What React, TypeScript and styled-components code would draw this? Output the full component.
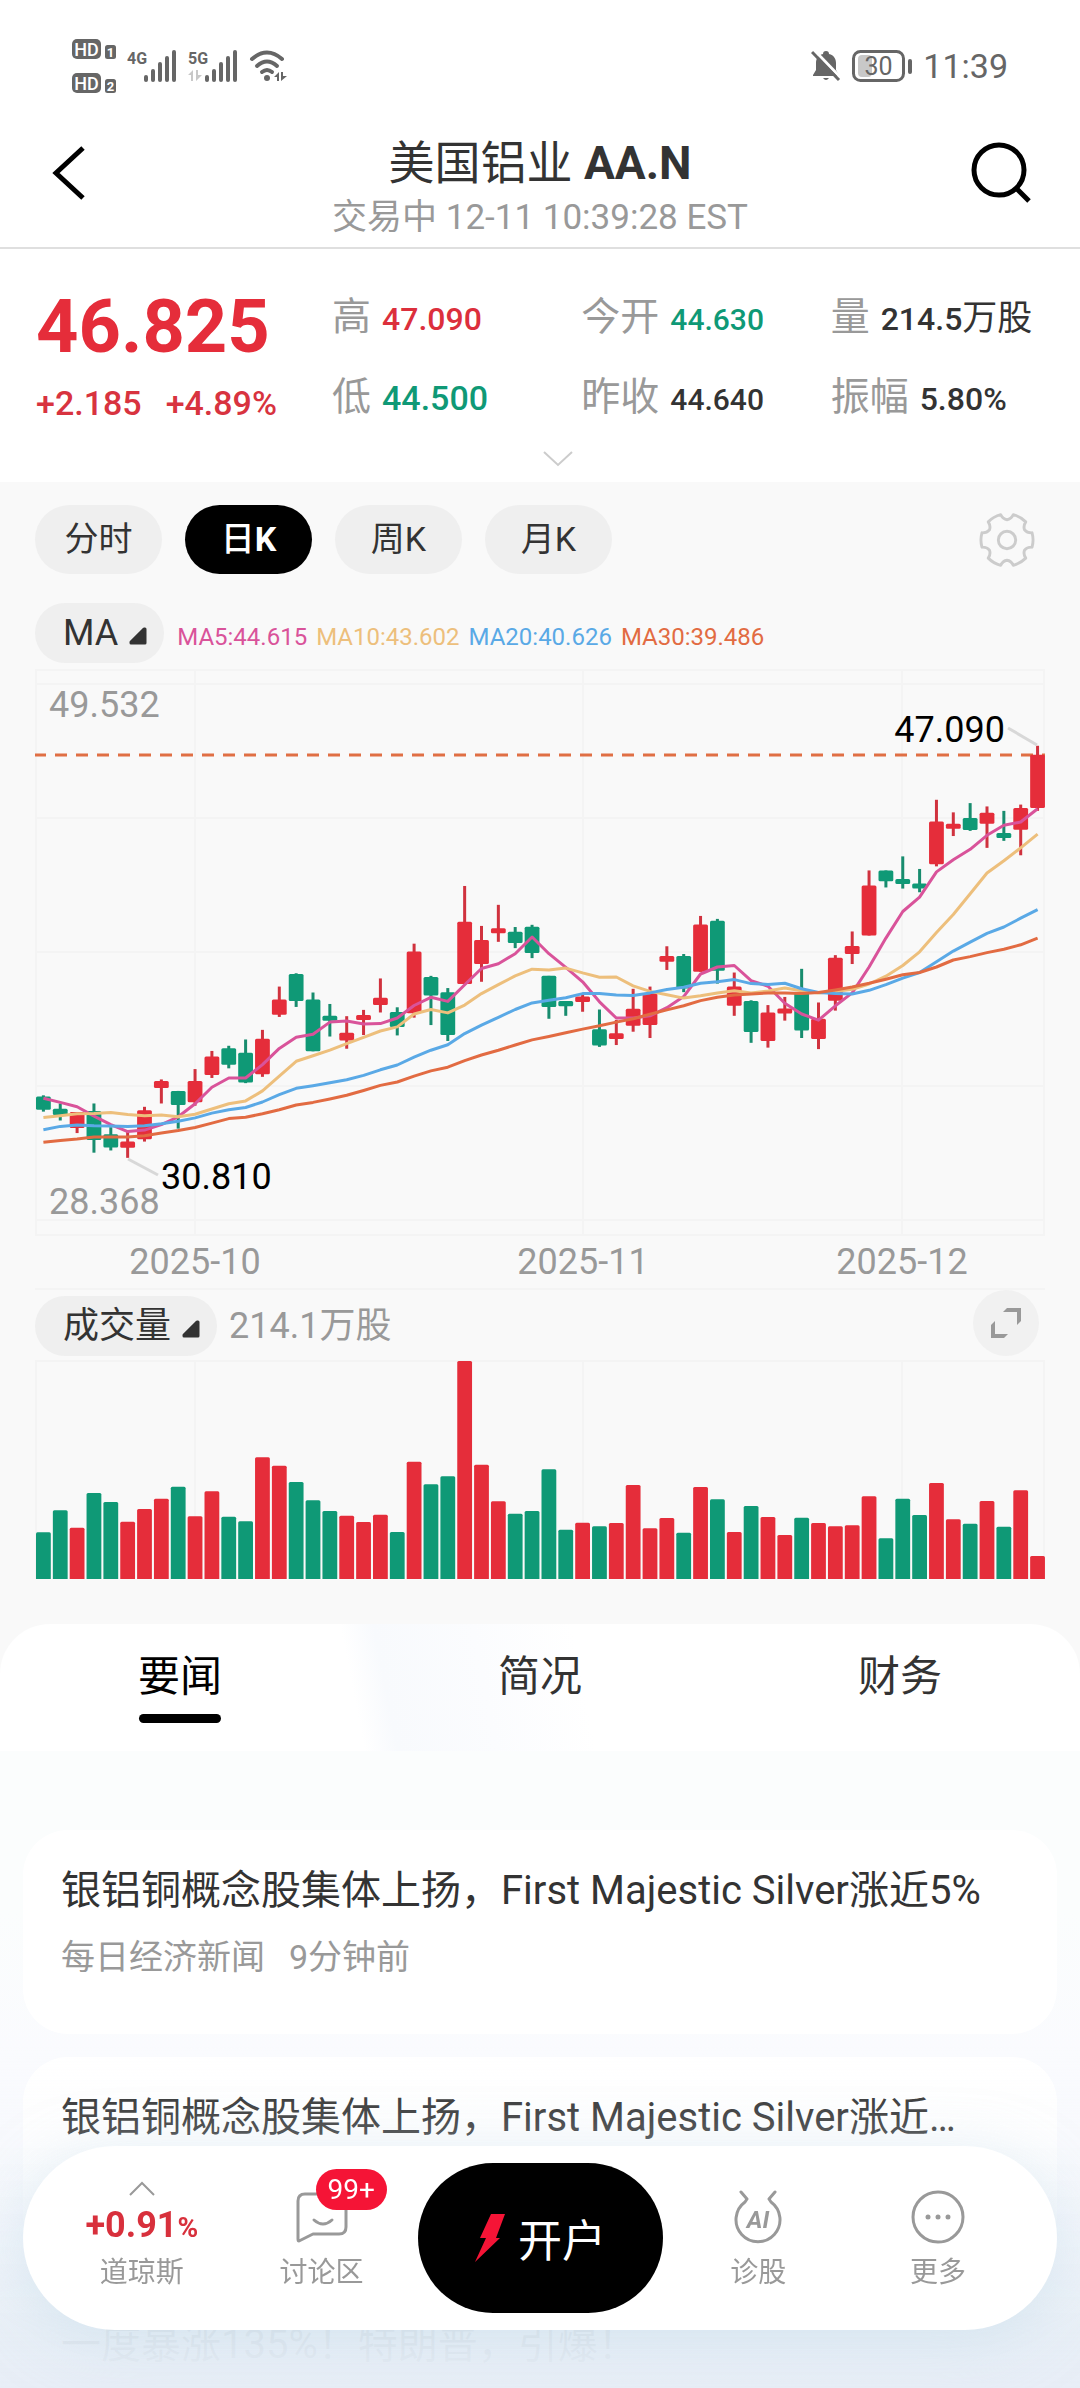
import React, { useState } from "react";
import styled, { createGlobalStyle } from "styled-components";

const RED = "#e52d3a";
const GREEN = "#0f9976";
const GRAY = "#999999";
const INK = "#333333";

const GlobalStyle = createGlobalStyle`
  * { box-sizing: border-box; }
  html, body { margin: 0; padding: 0; }
  body {
    background: #f9f9f9;
    color: ${INK};
    font-family: Roboto, "Noto Sans CJK SC", sans-serif;
    font-size: 36px;
  }
  button {
    border: 0;
    padding: 0;
    margin: 0;
    background: none;
    color: inherit;
    font: inherit;
    cursor: pointer;
  }
  svg { display: block; }
`;

/* ---------- data ---------- */

type Candle = ["u" | "d", number, number, number, number];

/* direction, high, body top, body bottom, low; in chart ticks */
const CANDLES: Candle[] = [
  ["d", 1177, 1180, 1216, 1221], ["d", 1199, 1213, 1230, 1245], ["u", 1222, 1222, 1265, 1279],
  ["d", 1199, 1219, 1298, 1332], ["d", 1263, 1282, 1318, 1326], ["u", 1276, 1302, 1319, 1346],
  ["u", 1208, 1217, 1296, 1302], ["u", 1134, 1138, 1157, 1199], ["d", 1165, 1165, 1203, 1267],
  ["u", 1106, 1138, 1196, 1205], ["u", 1057, 1072, 1122, 1130], ["d", 1043, 1050, 1094, 1104],
  ["d", 1026, 1062, 1142, 1144], ["u", 1000, 1024, 1120, 1127], ["u", 883, 918, 959, 965],
  ["d", 847, 849, 922, 938], ["d", 899, 918, 1058, 1058], ["d", 930, 962, 973, 1018],
  ["u", 963, 1008, 1029, 1051], ["u", 946, 960, 970, 1014], ["u", 861, 913, 933, 953],
  ["d", 939, 952, 992, 1015], ["u", 767, 788, 955, 967], ["d", 854, 857, 907, 987],
  ["d", 887, 898, 1014, 1030], ["u", 611, 708, 876, 876], ["u", 719, 757, 822, 870],
  ["u", 662, 725, 735, 762], ["d", 722, 735, 765, 779], ["d", 716, 721, 792, 806],
  ["d", 854, 854, 938, 970], ["d", 922, 922, 936, 962], ["u", 905, 910, 925, 951],
  ["d", 945, 998, 1042, 1046], ["u", 973, 1009, 1025, 1041], ["u", 889, 943, 989, 1005],
  ["u", 883, 901, 987, 1022], ["u", 774, 800, 816, 838], ["d", 795, 800, 888, 898],
  ["u", 692, 715, 843, 843], ["d", 700, 705, 840, 875], ["u", 845, 883, 935, 962],
  ["d", 920, 922, 1006, 1035], ["u", 933, 953, 1030, 1048], ["u", 911, 942, 954, 975],
  ["d", 835, 898, 1002, 1022], ["u", 926, 970, 1025, 1052], ["u", 798, 805, 921, 948],
  ["u", 734, 773, 795, 822], ["u", 569, 610, 745, 745], ["d", 569, 569, 598, 615],
  ["d", 531, 592, 604, 618], ["d", 565, 604, 617, 628], ["u", 378, 437, 552, 558],
  ["u", 412, 443, 455, 476], ["d", 387, 427, 460, 462], ["u", 396, 413, 443, 508],
  ["d", 408, 468, 479, 489], ["u", 391, 400, 459, 528], ["u", 232, 256, 400, 408],
];

const AVERAGES = [
  {
    label: "MA5:44.615", color: "#d9539a",
    values: [1185, 1196, 1208, 1233, 1256, 1275, 1271, 1256, 1235, 1200, 1155, 1130, 1130, 1094, 1050, 1020, 1012, 979, 976, 984, 983, 968, 934, 912, 923, 878, 834, 821, 794, 749, 794, 831, 870, 924, 968, 968, 962, 940, 910, 849, 830, 826, 867, 882, 928, 957, 974, 935, 900, 830, 752, 680, 641, 573, 540, 512, 474, 447, 438, 402],
  },
  {
    label: "MA10:43.602", color: "#edbf7c",
    values: [1237, 1232, 1227, 1226, 1223, 1229, 1232, 1230, 1235, 1228, 1214, 1200, 1192, 1165, 1125, 1085, 1070, 1055, 1037, 1020, 1003, 992, 957, 945, 954, 933, 902, 878, 854, 836, 838, 833, 846, 858, 857, 881, 896, 905, 914, 908, 900, 894, 900, 895, 887, 894, 900, 896, 890, 876, 855, 826, 789, 737, 688, 632, 576, 543, 508, 471],
  },
  {
    label: "MA20:40.626", color: "#5aa9e6",
    values: [1270, 1261, 1257, 1259, 1260, 1261, 1259, 1254, 1247, 1238, 1225, 1216, 1210, 1195, 1175, 1158, 1151, 1143, 1135, 1123, 1108, 1095, 1074, 1055, 1040, 1010, 987, 966, 945, 927, 920, 913, 902, 902, 906, 907, 900, 891, 885, 874, 870, 864, 875, 877, 874, 889, 899, 902, 903, 893, 878, 860, 845, 816, 787, 763, 739, 722, 698, 675],
  },
  {
    label: "MA30:39.486", color: "#e26b42",
    values: [1304, 1299, 1295, 1290, 1290, 1290, 1286, 1279, 1272, 1264, 1252, 1240, 1236, 1227, 1216, 1203, 1196, 1187, 1177, 1164, 1150, 1141, 1125, 1111, 1101, 1083, 1068, 1055, 1041, 1027, 1018, 1008, 998, 989, 979, 970, 958, 946, 935, 921, 912, 906, 903, 900, 900, 902, 899, 892, 884, 874, 863, 851, 845, 830, 811, 802, 791, 782, 770, 752],
  },
];

/* bar heights, highest is 654 */
const VOLUMES = [
  140, 206, 154, 258, 231, 172, 210, 241, 277, 188, 263, 187, 173, 365, 340, 291, 236, 204, 190, 171,
  193, 141, 352, 284, 308, 654, 343, 233, 196, 204, 329, 148, 169, 158, 168, 282, 152, 183, 139, 276,
  239, 141, 219, 186, 132, 184, 168, 158, 161, 248, 122, 241, 192, 288, 179, 166, 234, 157, 266, 69,
];

const MONTHS = [
  { x: 160, label: "2025-10" },
  { x: 548, label: "2025-11" },
  { x: 867, label: "2025-12" },
];

const xOf = (i: number) => 8.4 + i * 16.85;
const yOf = (tick: number) => 15 + ((tick - 65) * 536) / 1449;

/* ---------- shell ---------- */

const Shell = styled.div`
  height: 100vh;
  display: flex;
  flex-direction: column;
  overflow: hidden;
`;

const TopArea = styled.header`
  background: #fff;
  border-bottom: 2px solid #dfdfdf;
`;

const StatusBar = styled.div`
  display: flex;
  justify-content: space-between;
  align-items: center;
  height: 98px;
  padding: 34px 72px 0;
  color: #666;
`;

const StatusGroup = styled.div`
  display: flex;
  align-items: center;
  gap: 11px;
`;

const Clock = styled.time`
  font-size: 34px;
  line-height: 40px;
`;

const TitleBar = styled.div`
  display: grid;
  grid-template-columns: 1fr auto 1fr;
  padding: 33px 48px 7px;
`;

const IconButton = styled.button<{ $end?: boolean }>`
  height: 84px;
  display: flex;
  align-items: center;
  justify-self: ${(p) => (p.$end ? "end" : "start")};
`;

const TitleBlock = styled.div`
  padding-top: 2px;
  text-align: center;
`;

const Title = styled.h1`
  margin: 0 0 3px;
  font-size: 46px;
  line-height: 60px;
  font-weight: 400;
  b { font-weight: 700; }
`;

const Subtitle = styled.p`
  margin: 0;
  font-size: 35px;
  line-height: 44px;
  color: ${GRAY};
`;

const Scroller = styled.main`
  flex: 1;
  min-height: 0;
  display: flex;
  flex-direction: column;
  overflow-y: auto;
  scrollbar-width: none;
  & > * { flex-shrink: 0; }
`;

/* ---------- quote ---------- */

const Quote = styled.section`
  background: #fff;
  padding: 38px 0 15px 36px;
`;

const QuoteGrid = styled.div`
  display: grid;
  grid-template-columns: 296px 1fr;
  align-items: start;
`;

const LastPrice = styled.div`
  font-size: 74px;
  line-height: 80px;
  font-weight: 700;
  color: ${RED};
`;

const Change = styled.div`
  display: flex;
  gap: 24px;
  font-size: 34px;
  line-height: 72px;
  font-weight: 500;
  color: #d8333f;
`;

const Metrics = styled.dl`
  margin: 0;
  display: grid;
  grid-template-columns: repeat(3, 1fr);
  row-gap: 17px;
`;

const Metric = styled.div`
  display: flex;
  align-items: baseline;
  gap: 11px;
  line-height: 60px;
  white-space: nowrap;
  dt { font-size: 39px; color: ${GRAY}; }
`;

const MetricValue = styled.dd<{ $color: string; $size: number }>`
  margin: 0;
  font-size: ${(p) => p.$size}px;
  font-weight: 500;
  color: ${(p) => p.$color};
  span { font-weight: 400; font-size: 35px; }
`;

const MoreRow = styled.div`
  display: flex;
  justify-content: center;
  padding-top: 12px;
`;

const METRICS = [
  { label: "高", value: "47.090", color: "#dc2f3c", size: 32 },
  { label: "今开", value: "44.630", color: GREEN, size: 30 },
  { label: "量", value: "214.5", unit: "万股", color: INK, size: 32 },
  { label: "低", value: "44.500", color: GREEN, size: 34 },
  { label: "昨收", value: "44.640", color: INK, size: 30 },
  { label: "振幅", value: "5.80%", color: INK, size: 32 },
];

/* ---------- chart section ---------- */

const ChartSection = styled.section`
  background: #f9f9f9;
  padding: 23px 35px 45px;
`;

const PeriodBar = styled.div`
  display: flex;
  align-items: center;
  gap: 23px;
  margin-bottom: 29px;
`;

const Period = styled.button<{ $active: boolean }>`
  width: 127px;
  height: 69px;
  border-radius: 35px;
  font-size: 34px;
  line-height: 69px;
  font-weight: ${(p) => (p.$active ? 700 : 400)};
  color: ${(p) => (p.$active ? "#fff" : INK)};
  background: ${(p) => (p.$active ? "#000" : "#efefef")};
  span { font-weight: ${(p) => (p.$active ? 500 : 400)}; }
`;

const Settings = styled.button`
  margin-left: auto;
  padding-right: 10px;
`;

const IndicatorRow = styled.div`
  display: flex;
  align-items: baseline;
  gap: 13px;
  margin-bottom: 6px;
`;

const AverageList = styled.div`
  display: flex;
  gap: 9px;
`;

const VolumeRow = styled.div`
  display: flex;
  align-items: flex-end;
  gap: 12px;
  margin-bottom: 4px;
`;

const Pill = styled.button`
  display: flex;
  align-items: baseline;
  gap: 11px;
  height: 60px;
  padding: 0 17px 0 28px;
  border-radius: 30px;
  background: #efefef;
  font-size: 36px;
  line-height: 60px;
`;

const AverageLabel = styled.span<{ $color: string }>`
  font-size: 24px;
  line-height: 30px;
  color: ${(p) => p.$color};
`;

const VolumeText = styled.span`
  font-size: 36px;
  line-height: 60px;
  color: ${GRAY};
`;

const Expand = styled.button`
  margin: 0 6px 0 auto;
  width: 66px;
  height: 66px;
  border-radius: 50%;
  background: #f1f1f1;
  display: grid;
  place-items: center;
`;

const ChartSvg = styled.svg`
  width: 100%;
  height: auto;
  font-family: Roboto, sans-serif;
  font-size: 36px;
`;

const Triangle = () => (
  <svg width="18" height="18" viewBox="0 0 18 18" aria-hidden="true">
    <path d="M15 2 L16 2 V16 H2 V15 Z" fill={INK} stroke={INK} strokeWidth="3" strokeLinejoin="round" />
  </svg>
);

const gearPath = () => {
  const pt = (deg: number, r: number) => {
    const a = (deg * Math.PI) / 180;
    return `${(29 + r * Math.cos(a)).toFixed(2)} ${(29 + r * Math.sin(a)).toFixed(2)}`;
  };
  let d = "";
  for (let k = 0; k < 6; k++) {
    const a = k * 60;
    d += `${k ? "L" : "M"}${pt(a - 16, 27)} Q${pt(a, 28)} ${pt(a + 16, 27)} Q${pt(a + 19, 22)} ${pt(a + 30, 21)} Q${pt(a + 41, 22)} ${pt(a + 44, 27)} `;
  }
  return d + "Z";
};

const GearIcon = () => (
  <svg width="56" height="56" viewBox="0 0 58 58" fill="none" stroke="#cccccc" strokeWidth="3" strokeLinejoin="round" aria-hidden="true">
    <path d={gearPath()} />
    <circle cx="29" cy="29" r="9" />
  </svg>
);

const PriceChart = () => (
  <ChartSvg viewBox="0 0 1010 621" role="img" aria-label="日K">
    <g stroke="#f4f4f4" strokeWidth="2" fill="none">
      <rect x="1" y="1" width="1008" height="565" />
      {[15, 149, 283, 417, 551].map((y) => (
        <line key={y} x1="0" x2="1010" y1={y} y2={y} />
      ))}
      {MONTHS.map((m) => (
        <line key={m.x} x1={m.x} x2={m.x} y1="0" y2="566" />
      ))}
      <line x1="0" x2="1010" y1="620" y2="620" />
    </g>
    <line x1="-1" x2="1010" y1="86" y2="86" stroke="#e06f44" strokeWidth="3" strokeDasharray="12 9" />
    {CANDLES.map(([dir, high, top, bottom, low], i) => {
      const color = dir === "u" ? RED : GREEN;
      const h = Math.max(5, yOf(bottom) - yOf(top));
      return (
        <g key={i} fill={color}>
          <rect x={xOf(i) - 1.5} y={yOf(high)} width="3" height={yOf(low) - yOf(high)} fill={dir === "u" ? "#d0323e" : "#188c6e"} />
          <rect x={xOf(i) - 7.4} y={yOf(top)} width="14.8" height={h} rx="1.5" />
        </g>
      );
    })}
    {AVERAGES.map((a) => (
      <polyline
        key={a.label}
        points={a.values.map((v, i) => `${xOf(i).toFixed(1)},${yOf(v).toFixed(1)}`).join(" ")}
        fill="none"
        stroke={a.color}
        strokeWidth="3"
        strokeLinejoin="round"
      />
    ))}
    <g stroke="#d8d8d8" strokeWidth="3">
      <line x1="973" y1="59" x2="1002" y2="76" />
      <line x1="93" y1="490" x2="123" y2="506" />
    </g>
    <g fill={GRAY}>
      <text x="14" y="48">49.532</text>
      <text x="14" y="545">28.368</text>
      {MONTHS.map((m) => (
        <text key={m.label} x={m.x} y="605" textAnchor="middle">{m.label}</text>
      ))}
    </g>
    <g fill="#000">
      <text x="970" y="73" textAnchor="end">47.090</text>
      <text x="126" y="520">30.810</text>
    </g>
  </ChartSvg>
);

const VolumeChart = () => (
  <ChartSvg viewBox="0 0 1010 219" role="img" aria-label="成交量">
    <g stroke="#f4f4f4" strokeWidth="2" fill="none">
      <path d="M1 219 V1 H1009 V219" />
      {MONTHS.map((m) => (
        <line key={m.x} x1={m.x} x2={m.x} y1="0" y2="219" />
      ))}
    </g>
    {VOLUMES.map((v, i) => {
      const x = xOf(i) - 7.4;
      const y = 219 - v / 3;
      return (
        <path
          key={i}
          d={`M${x} 219 V${y + 1.5} Q${x} ${y} ${x + 1.5} ${y} H${x + 13.3} Q${x + 14.8} ${y} ${x + 14.8} ${y + 1.5} V219 Z`}
          fill={CANDLES[i][0] === "u" ? RED : GREEN}
        />
      );
    })}
  </ChartSvg>
);

/* ---------- news ---------- */

const TabBar = styled.div`
  display: grid;
  grid-template-columns: repeat(3, 1fr);
  border-radius: 50px 50px 0 0;
  background: linear-gradient(79deg, #fff 33%, #f8fafd 36%, #fbfcfe 45%, #fff 54%);
`;

const Tab = styled.button<{ $active: boolean }>`
  height: 127px;
  padding-top: 25px;
  display: flex;
  flex-direction: column;
  align-items: center;
  gap: 9px;
  font-size: 42px;
  line-height: 56px;
  color: ${(p) => (p.$active ? "#000" : INK)};
  &::after {
    content: "";
    width: 82px;
    height: 9px;
    border-radius: 5px;
    background: ${(p) => (p.$active ? "#000" : "transparent")};
  }
`;

const Feed = styled.section`
  display: flex;
  flex-direction: column;
  gap: 23px;
  padding: 79px 23px 23px;
  background: linear-gradient(180deg, #fbfdfd 0, #fbfdfd 160px, #fafbfe 300px);
`;

const Card = styled.article`
  min-height: 204px;
  padding: 31px 38px;
  border-radius: 45px;
  background: #fff;
`;

const Headline = styled.h2`
  margin: 0 0 14px;
  font-size: 40px;
  line-height: 60px;
  font-weight: 400;
  white-space: nowrap;
`;

const Meta = styled.p`
  margin: 0;
  display: flex;
  gap: 24px;
  font-size: 34px;
  line-height: 44px;
  color: ${GRAY};
`;

/* ---------- bottom dock ---------- */

const Dock = styled.div`
  position: fixed;
  left: 0;
  right: 0;
  bottom: 0;
  padding: 100px 23px 58px;
  background: linear-gradient(
    180deg,
    rgba(250, 251, 254, 0) 0,
    rgba(240, 244, 250, 0.12) 85px,
    rgba(231, 238, 246, 0.95) 284px,
    rgba(232, 238, 247, 1) 342px
  );
`;

const DockBar = styled.nav`
  height: 184px;
  padding: 0 29px;
  border-radius: 92px;
  background: #fff;
  box-shadow: 0 12px 60px rgba(196, 219, 234, 0.5);
  display: flex;
  align-items: center;
`;

const DockItem = styled.button`
  position: relative;
  flex: 1;
  height: 100%;
  padding-bottom: 37px;
  display: flex;
  flex-direction: column;
  align-items: center;
  justify-content: flex-end;
  gap: 9px;
  color: ${GRAY};
  font-size: 28px;
  line-height: 40px;
`;

const IndexValue = styled.span`
  display: flex;
  flex-direction: column;
  align-items: center;
  gap: 12px;
  font-size: 36px;
  line-height: 32px;
  font-weight: 700;
  color: #d8303c;
  small { font-size: 28px; }
`;

const Badge = styled.span`
  position: absolute;
  top: 23px;
  left: 50%;
  margin-left: -6px;
  width: 71px;
  height: 41px;
  border-radius: 21px;
  background: #f51436;
  color: #fff;
  font-size: 28px;
  line-height: 41px;
`;

const OpenAccount = styled.button`
  width: 245px;
  height: 150px;
  margin: 0 6px;
  border-radius: 75px;
  background: #000;
  color: #fff;
  font-size: 44px;
  display: flex;
  align-items: center;
  justify-content: center;
  gap: 12px;
`;

/* ---------- status icons ---------- */

const HdIcon = () => (
  <svg width="44" height="64" viewBox="0 -5 44 64" aria-hidden="true">
    {[1, 2].map((n) => (
      <g key={n} transform={`translate(0 ${n === 1 ? 0 : 34})`} fontFamily="Roboto, sans-serif" fontWeight="700" fill="#fff" textAnchor="middle">
        <rect width="29" height="20" rx="5" fill="#666" />
        <text x="14.5" y="16.5" fontSize="18" fontWeight="500">HD</text>
        <rect x="33" y="6" width="11" height="14" rx="2.5" fill="#666" />
        <text x="38.5" y="18" fontSize="13">{n}</text>
      </g>
    ))}
  </svg>
);

const Signal = ({ label, transfer }: { label: string; transfer?: boolean }) => (
  <svg width="50" height="34" viewBox="0 0 50 34" aria-hidden="true">
    <text x="0" y="15" fontFamily="Roboto, sans-serif" fontWeight="700" fontSize="16" fill="#666">{label}</text>
    {[28, 22, 15, 9, 3].map((y, i) => (
      <line key={y} x1={19 + i * 7} x2={19 + i * 7} y1={y} y2="31" stroke="#666" strokeWidth="4" strokeLinecap="round" />
    ))}
    {transfer && <path d="M0 26 L5 21 V32 H3 V26 Z M8 21 V32 L14 26 H10 V21 Z" fill="#c8c8c8" />}
  </svg>
);

const WifiIcon = () => (
  <svg width="38" height="34" viewBox="0 0 38 34" fill="none" stroke="#666" strokeWidth="4" strokeLinecap="round" aria-hidden="true">
    <path d="M3 10 Q18 -3 33 10" />
    <path d="M8 17 Q18 8 28 17" />
    <path d="M13 23 Q18 19 23 23" />
    <circle cx="18" cy="29" r="3" fill="#666" stroke="none" />
    <path d="M25 28 L30 23 V32 H28 V28 Z M32 23 V32 L38 27 H34 V23 Z" fill="#666" stroke="none" />
  </svg>
);

const BellOffIcon = () => (
  <svg width="30" height="32" viewBox="0 0 30 32" aria-hidden="true">
    <path d="M15 1 C17 1 18 2 18 4 C23 5 25 9 25 13 V20 L28 25 V26 H2 V25 L5 20 V13 C5 9 7 5 12 4 C12 2 13 1 15 1 Z" fill="#666" />
    <path d="M12 28 H18 Q15 32 12 28 Z" fill="#666" />
    <path d="M3 0 L30 28" stroke="#fff" strokeWidth="3" />
    <path d="M1 2 L28 30" stroke="#666" strokeWidth="3" />
  </svg>
);

const BatteryIcon = () => (
  <svg width="60" height="32" viewBox="0 0 60 32" aria-hidden="true">
    <rect x="6" y="5" width="14" height="22" rx="4" fill="#c8c8c8" />
    <rect x="1.5" y="1.5" width="50" height="29" rx="7" fill="none" stroke="#666" strokeWidth="3" />
    <rect x="56" y="9" width="4" height="15" rx="2" fill="#666" />
    <text x="26.5" y="25" textAnchor="middle" fontFamily="Roboto, sans-serif" fontSize="25" fill="#666">30</text>
  </svg>
);

const PERIODS = [
  { han: "分时", latin: "" },
  { han: "日", latin: "K" },
  { han: "周", latin: "K" },
  { han: "月", latin: "K" },
];
const TABS = ["要闻", "简况", "财务"];

const NEWS = [
  { title: "银铝铜概念股集体上扬，First Majestic Silver涨近5%", source: "每日经济新闻", time: "9分钟前" },
  { title: "银铝铜概念股集体上扬，First Majestic Silver涨近…" },
  { title: "一度暴涨135%！特朗普，引爆！" },
];

export default function App() {
  const [period, setPeriod] = useState(1);
  const [tab, setTab] = useState(0);

  return (
    <>
      <GlobalStyle />
      <Shell>
        <TopArea>
          <StatusBar>
            <StatusGroup>
              <HdIcon />
              <Signal label="4G" />
              <Signal label="5G" transfer />
              <WifiIcon />
            </StatusGroup>
            <StatusGroup>
              <BellOffIcon />
              <BatteryIcon />
              <Clock>11:39</Clock>
            </StatusGroup>
          </StatusBar>
          <TitleBar>
            <IconButton aria-label="返回">
              <svg width="40" height="56" viewBox="0 0 40 56" fill="none" stroke="#000" strokeWidth="5">
                <path d="M35 3 L8 28 L35 53" />
              </svg>
            </IconButton>
            <TitleBlock>
              <Title>美国铝业 <b>AA.N</b></Title>
              <Subtitle>交易中 12-11 10:39:28 EST</Subtitle>
            </TitleBlock>
            <IconButton $end aria-label="搜索">
              <svg width="62" height="62" viewBox="0 0 62 62" fill="none" stroke="#000" strokeWidth="5">
                <circle cx="29" cy="28" r="25" />
                <path d="M46 46 L59 59" />
              </svg>
            </IconButton>
          </TitleBar>
        </TopArea>

        <Scroller>
          <Quote>
            <QuoteGrid>
              <div>
                <LastPrice>46.825</LastPrice>
                <Change>
                  <span>+2.185</span>
                  <span>+4.89%</span>
                </Change>
              </div>
              <Metrics>
                {METRICS.map((m) => (
                  <Metric key={m.label}>
                    <dt>{m.label}</dt>
                    <MetricValue $color={m.color} $size={m.size}>
                      {m.value}
                      {m.unit && <span>{m.unit}</span>}
                    </MetricValue>
                  </Metric>
                ))}
              </Metrics>
            </QuoteGrid>
            <MoreRow>
              <button aria-label="展开">
                <svg width="32" height="16" viewBox="0 0 32 16" fill="none" stroke="#cccccc" strokeWidth="2">
                  <path d="M2 1 L16 14 L30 1" />
                </svg>
              </button>
            </MoreRow>
          </Quote>

          <ChartSection>
            <PeriodBar>
              {PERIODS.map((p, i) => (
                <Period key={p.han} $active={i === period} onClick={() => setPeriod(i)}>
                  <span>{p.han}</span>
                  {p.latin}
                </Period>
              ))}
              <Settings aria-label="设置">
                <GearIcon />
              </Settings>
            </PeriodBar>
            <IndicatorRow>
              <Pill>
                MA
                <Triangle />
              </Pill>
              <AverageList>
                {AVERAGES.map((a) => (
                  <AverageLabel key={a.label} $color={a.color}>{a.label}</AverageLabel>
                ))}
              </AverageList>
            </IndicatorRow>
            <PriceChart />
            <VolumeRow>
              <Pill>
                成交量
                <Triangle />
              </Pill>
              <VolumeText>214.1万股</VolumeText>
              <Expand aria-label="全屏">
                <svg width="30" height="30" viewBox="0 0 30 30" fill="#999">
                  <path d="M16 0 H30 V13 L26 17 V4 H12 Z" />
                  <path d="M0 17 L4 13 V26 H17 L13 30 H0 Z" />
                </svg>
              </Expand>
            </VolumeRow>
            <VolumeChart />
          </ChartSection>

          <TabBar>
            {TABS.map((t, i) => (
              <Tab key={t} $active={i === tab} onClick={() => setTab(i)}>{t}</Tab>
            ))}
          </TabBar>

          <Feed>
            {NEWS.map((n) => (
              <Card key={n.title}>
                <Headline>{n.title}</Headline>
                {n.source && (
                  <Meta>
                    <span>{n.source}</span>
                    <span>{n.time}</span>
                  </Meta>
                )}
              </Card>
            ))}
          </Feed>
        </Scroller>

        <Dock>
          <DockBar>
            <DockItem>
              <IndexValue>
                <svg width="26" height="16" viewBox="0 0 26 16" fill="none" stroke="#999" strokeWidth="2">
                  <path d="M1 14 L13 2 L25 14" />
                </svg>
                <span>+0.91<small>%</small></span>
              </IndexValue>
              道琼斯
            </DockItem>
            <DockItem>
              <svg width="52" height="54" viewBox="0 0 52 54" fill="none" stroke="#999" strokeWidth="3" strokeLinejoin="round" strokeLinecap="round">
                <path d="M9 4 H43 Q50 4 50 11 V37 Q50 44 43 44 H17 L3 51 Q2 51 2 49 V11 Q2 4 9 4 Z" />
                <path d="M18 30 Q27 38 36 30" />
              </svg>
              讨论区
              <Badge>99+</Badge>
            </DockItem>
            <OpenAccount>
              <svg width="32" height="50" viewBox="0 0 32 50" fill="#f51436">
                <path d="M17 1 H31 L22 25 H26 L1 49 L12 25 H6 Z" />
              </svg>
              开户
            </OpenAccount>
            <DockItem>
              <svg width="52" height="54" viewBox="0 0 52 54" fill="none" stroke="#999" strokeWidth="3" strokeLinecap="round" strokeLinejoin="round">
                <path d="M9 2 L15 9 L13 12 A22 22 0 1 0 39 12 L37 9 L43 2" />
                <text x="26" y="38" textAnchor="middle" fontFamily="Roboto, sans-serif" fontSize="24" fontWeight="700" fontStyle="italic" fill="#999" stroke="none">AI</text>
              </svg>
              诊股
            </DockItem>
            <DockItem>
              <svg width="54" height="54" viewBox="0 0 54 54" fill="none" stroke="#999" strokeWidth="3">
                <circle cx="27" cy="27" r="25" />
                <g fill="#999" stroke="none">
                  <circle cx="17" cy="27" r="2.5" />
                  <circle cx="27" cy="27" r="2.5" />
                  <circle cx="37" cy="27" r="2.5" />
                </g>
              </svg>
              更多
            </DockItem>
          </DockBar>
        </Dock>
      </Shell>
    </>
  );
}
